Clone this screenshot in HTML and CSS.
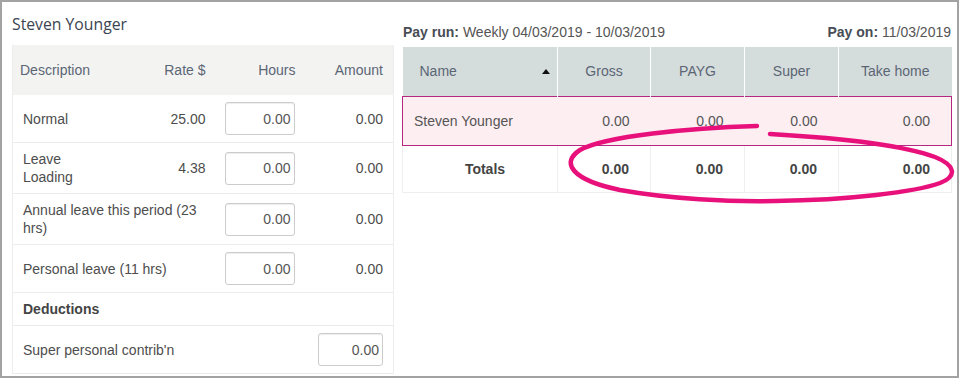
FILE: index.html
```html
<!DOCTYPE html>
<html lang="en">
<head>
<meta charset="utf-8">
<title>Pay run</title>
<link rel="stylesheet" href="styles.css">
</head>
<body>
<div class="frame">
  <section class="left">
    <h2 class="title">Steven Younger</h2>
    <table class="earn">
      <colgroup>
        <col class="c-desc"><col class="c-rate"><col class="c-hours"><col class="c-amt">
      </colgroup>
      <thead>
        <tr><th class="th-desc">Description</th><th>Rate $</th><th>Hours</th><th>Amount</th></tr>
      </thead>
      <tbody>
        <tr><td>Normal</td><td class="num">25.00</td><td><input class="field" type="text" value="0.00" readonly></td><td class="num">0.00</td></tr>
        <tr><td>Leave Loading</td><td class="num">4.38</td><td><input class="field" type="text" value="0.00" readonly></td><td class="num">0.00</td></tr>
        <tr><td colspan="2">Annual leave this period (23 hrs)</td><td><input class="field" type="text" value="0.00" readonly></td><td class="num">0.00</td></tr>
        <tr><td colspan="2">Personal leave (11 hrs)</td><td><input class="field" type="text" value="0.00" readonly></td><td class="num">0.00</td></tr>
        <tr class="section"><td colspan="4">Deductions</td></tr>
        <tr><td colspan="3">Super personal contrib'n</td><td class="num"><input class="field field-sm" type="text" value="0.00" readonly></td></tr>
      </tbody>
    </table>
  </section>
  <section class="right">
    <div class="payline">
      <span><b>Pay run:</b> Weekly 04/03/2019 - 10/03/2019</span>
      <span><b>Pay on:</b> 11/03/2019</span>
    </div>
    <table class="summary">
      <colgroup>
        <col class="s-name"><col class="s-gross"><col class="s-payg"><col class="s-super"><col class="s-take">
      </colgroup>
      <thead>
        <tr>
          <th><div class="name-head"><span>Name</span><i class="sort"></i></div></th>
          <th>Gross</th><th>PAYG</th><th>Super</th><th>Take home</th>
        </tr>
      </thead>
      <tbody>
        <tr class="selected"><td>Steven Younger</td><td>0.00</td><td>0.00</td><td>0.00</td><td>0.00</td></tr>
        <tr class="totals"><td>Totals</td><td>0.00</td><td>0.00</td><td>0.00</td><td>0.00</td></tr>
      </tbody>
    </table>
  </section>
  <svg class="ink" viewBox="0 0 959 378" width="959" height="378" aria-hidden="true">
    <path d="M757,126 C690,128 605,136 580,150 C560,163 572,180 620,190 C670,199 730,202 775,201 C850,200 915,192 940,183 C958,176 955,165 935,157 C900,144 840,138 770,134" fill="none" stroke="#e8117b" stroke-width="4.5" stroke-linecap="round"/>
  </svg>
</div>
</body>
</html>
```

FILE: styles.css
```css
* { box-sizing: border-box; }

html, body {
  margin: 0;
  padding: 0;
  background: #fff;
}

body {
  font-family: "Liberation Sans", Arial, sans-serif;
  font-size: 14px;
  color: #4d4d4d;
}

.frame {
  position: relative;
  width: 959px;
  height: 378px;
  border: 2px solid #a3a3a3;
  display: flex;
  padding: 0 6px 0 10px;
  overflow: hidden;
  background: #fff;
}

.left {
  width: 381px;
  flex: none;
}

.right {
  width: 549px;
  flex: none;
  margin-left: 9px;
  padding-top: 21px;
}

.title {
  margin: 0 0 11px;
  padding-top: 12px;
  font-family: "Open Sans", "Liberation Sans", sans-serif;
  font-size: 15.75px;
  line-height: 20px;
  font-weight: 400;
  color: #3b4552;
}

/* Earnings table */
.earn {
  width: 381px;
  border-collapse: collapse;
  table-layout: fixed;
  border-left: 1px solid #ededed;
  border-right: 1px solid #ededed;
}

.c-desc { width: 100px; }
.c-rate { width: 103px; }
.c-hours { width: 90px; }
.c-amt { width: 88px; }

.earn th {
  background: #f3f3f2;
  height: 50px;
  font-weight: normal;
  color: #5b6675;
  text-align: right;
  padding: 0 10px;
  line-height: 18px;
}

.earn th.th-desc {
  text-align: left;
  padding-left: 7px;
}

.earn td {
  padding: 7px 10px;
  line-height: 18px;
  vertical-align: middle;
  border-bottom: 1px solid #ececec;
  color: #4d4d4d;
}

.earn td.num {
  text-align: right;
}

.earn .section td {
  font-weight: bold;
  color: #444;
}

.field {
  display: block;
  width: 70px;
  height: 33px;
  margin: 0 0 0 -1px;
  border: 1px solid #cccccc;
  border-radius: 3px;
  padding: 0 3px 0 4px;
  font-family: "Liberation Sans", Arial, sans-serif;
  font-size: 14px;
  color: #555;
  text-align: right;
  background: #fff;
  box-shadow: inset 0 1px 1px rgba(0, 0, 0, 0.075);
  outline: none;
}

.field-sm {
  width: 65px;
  margin-left: auto;
}

/* Pay run summary */
.payline {
  display: flex;
  justify-content: space-between;
  line-height: 18px;
  margin-bottom: 6px;
  padding-left: 1px;
  color: #555;
}

.payline b {
  color: #484d55;
}

.summary {
  width: 549px;
  border-collapse: collapse;
  table-layout: fixed;
}

.s-name { width: 155px; }
.s-gross { width: 93px; }
.s-payg { width: 94px; }
.s-super { width: 94px; }
.s-take { width: 113px; }

.summary th {
  background: #d5dcdc;
  height: 49px;
  font-weight: normal;
  color: #5b6675;
  text-align: center;
  padding: 0 6px;
  line-height: 18px;
  border-left: 1px solid #fff;
}

.summary th:first-child {
  border-left: none;
  text-align: left;
  padding: 0 7px 0 17px;
}

.name-head {
  display: flex;
  justify-content: space-between;
  align-items: center;
}

.sort {
  display: block;
  width: 0;
  height: 0;
  border-left: 4px solid transparent;
  border-right: 4px solid transparent;
  border-bottom: 5px solid #111;
}

.summary td {
  line-height: 18px;
  padding: 15px 21px 15px 11px;
  text-align: right;
  color: #555;
}

.selected td {
  background: #fdeef2;
  border-top: 1px solid #b4297f;
  border-bottom: 1px solid #b4297f;
}

.selected td:first-child {
  border-left: 1px solid #b4297f;
  text-align: left;
}

.selected td:last-child {
  border-right: 1px solid #b4297f;
}

.totals td {
  font-weight: bold;
  color: #444;
  border: 1px solid #eeeeee;
  border-top: none;
  padding: 14px 21px 14px 11px;
}

.totals td:first-child {
  text-align: center;
  padding: 14px 11px 14px 21px;
}

.ink {
  position: absolute;
  left: -2px;
  top: -2px;
  pointer-events: none;
}
```
